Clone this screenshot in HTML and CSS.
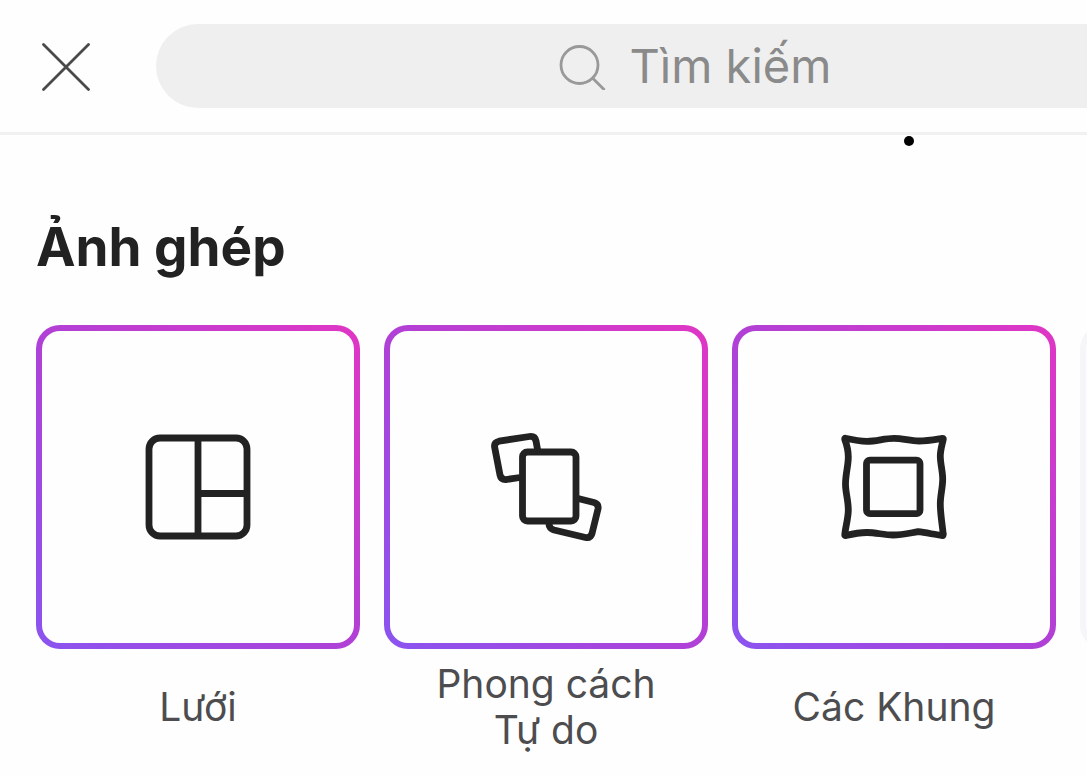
FILE: index.html
```html
<!DOCTYPE html>
<html lang="vi">
  <head>
    <meta charset="utf-8">
    <meta name="viewport" content="width=device-width, initial-scale=1">
    <title>Ảnh ghép</title>
    <link rel="stylesheet" href="styles.css">
  </head>
  <body>
    <header class="header">
      <button class="close" type="button" aria-label="Đóng">
        <svg width="50" height="50" viewBox="0 0 50 50" fill="none" stroke="#4a4a4a" stroke-width="2.8" stroke-linecap="round">
          <path d="M2.5 3.5 L47.5 48.5 M47.5 3.5 L2.5 48.5"/>
        </svg>
      </button>
      <label class="search">
        <svg width="48" height="48" viewBox="0 0 48 48" fill="none" stroke="#999" stroke-width="2.8">
          <circle cx="21.5" cy="23" r="18.5"/>
          <path d="M34.500 36 L46.500 48"/>
        </svg>
        <input class="search-input" type="text" placeholder="Tìm kiếm" aria-label="Tìm kiếm">
      </label>
    </header>

    <div class="indicator"><span class="dot"></span></div>

    <main>
      <h1 class="title">Ảnh ghép</h1>
      <div class="cards">
        <button class="card" type="button">
          <span class="tile">
            <svg width="120" height="120" viewBox="0 0 120 120" fill="none" stroke="#222" stroke-width="6.8">
              <rect x="11" y="11" width="98" height="98" rx="11"/>
              <path d="M60 11 V109 M60 66.5 H109"/>
            </svg>
          </span>
          <span class="label">Lưới</span>
        </button>
        <button class="card" type="button">
          <span class="tile">
            <svg width="120" height="120" viewBox="0 0 120 120" fill="none" stroke="#222" stroke-width="6.8" stroke-linejoin="round">
              <path d="M34 50.5 L20.5 52.5 Q15 53 14 48 L8.700 20.500 Q7.700 15.500 13 14.200 L43.500 9.500 Q49 8.800 50 14 L52 25"/>
              <path d="M92 71.5 L108 75.500 Q113 77 112 82 L106 106.500 Q104.500 111.500 99.500 110.500 L68 103 Q63 101.500 62.800 96"/>
              <rect x="36.5" y="25" width="53.5" height="69" rx="5"/>
            </svg>
          </span>
          <span class="label">Phong cách Tự do</span>
        </button>
        <button class="card" type="button">
          <span class="tile">
            <svg width="120" height="120" viewBox="0 0 120 120" fill="none" stroke="#222" stroke-width="6.8" stroke-linejoin="round">
              <path d="M11.5 11.3 C19 13 26 14.3 33 14.3 C43 14.3 50 11.3 60 11.3 C69 11.3 76 14 85 14 C93 14 101 12.5 108.7 11.3 Q109.500 11.300 109.200 12.500 C108.3 17 106.3 23 106.3 29 C106.3 37 108.7 44 108.7 52 C108.7 61 106.3 68 106.3 77 C106.3 87 108.3 98 109.200 107 Q109.500 109 108 108.500 C100 107.5 92 105.5 84 104.7 C76 106 68 108 59 108 C50 108 42 105.5 33 105.5 C26 105.5 18 107 12 108.5 Q10.500 109 10.800 107.500 C11.5 100 14.3 91 14.3 83 C14.3 73 11.5 66 11.5 57 C11.5 47 14.3 39 14.3 30 C14.3 23 12.5 17 10.800 12.500 Q10.500 11 11.500 11.300 Z"/>
              <rect x="32.5" y="33.2" width="53.5" height="53.5" rx="3.5"/>
            </svg>
          </span>
          <span class="label">Các Khung</span>
        </button>
        <button class="card" type="button" aria-label="Thêm">
          <span class="tile tile-plain"></span>
        </button>
      </div>
    </main>
  </body>
</html>
```
FILE: styles.css
```css
* {
  box-sizing: border-box;
}
body {
  margin: 0;
  background-color: #fefefe;
  color: #222;
  font-family: Inter, "Liberation Sans", sans-serif;
  overflow-x: hidden;
}
button {
  padding: 0;
  border: none;
  background: none;
  font: inherit;
  cursor: pointer;
}
svg {
  display: block;
  flex: none;
}

.header {
  display: flex;
  align-items: center;
  padding: 24px 0 24px 41px;
  border-bottom: 3px solid #f1f1f1;
  overflow: hidden;
}
.close {
  margin-right: 65px;
}
/* the field runs on past the right edge of the screen */
.search {
  flex: 1;
  display: flex;
  justify-content: center;
  align-items: center;
  gap: 24px;
  height: 84px;
  margin-right: -144px;
  border-radius: 42px;
  background-color: #efefef;
}
.search-input {
  width: 200px;
  padding: 0;
  border: none;
  outline: none;
  background: none;
  color: #222;
  font-family: inherit;
  font-size: 47px;
  line-height: 60px;
}
.search-input::placeholder {
  color: #8a8a8a;
  opacity: 1;
}

.indicator {
  display: flex;
  justify-content: flex-end;
  padding: 1px 173px 0 0;
}
.dot {
  width: 10px;
  height: 10px;
  border-radius: 50%;
  background-color: #000;
}

.title {
  margin: 0;
  padding: 69px 36px 46px;
  font-size: 53px;
  line-height: 64px;
  font-weight: 700;
}
.cards {
  display: flex;
  align-items: flex-start;
  gap: 24px;
  padding-left: 36px;
  overflow: hidden;
}
.card {
  flex: none;
  width: 324px;
}
.tile {
  display: flex;
  justify-content: center;
  align-items: center;
  height: 324px;
  border: 6px solid transparent;
  border-radius: 24px;
  background: linear-gradient(#fefefe, #fefefe) padding-box,
    linear-gradient(45deg, #8a54f0, #b140d6 50%, #e036c4) border-box;
}
.tile-plain {
  background: #fefefe;
  border-color: #f5f5fa;
}
.label {
  display: flex;
  justify-content: center;
  align-items: center;
  min-height: 92px;
  margin-top: 12px;
  padding: 0 32px;
  color: #4d4d4f;
  font-size: 39px;
  line-height: 46px;
}
```
